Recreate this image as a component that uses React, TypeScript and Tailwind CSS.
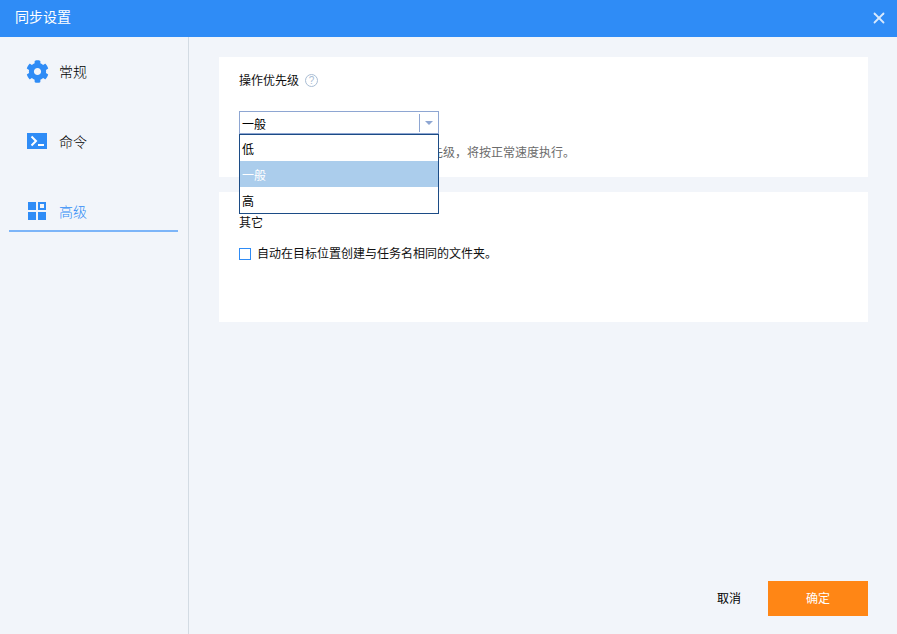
import { FaCog } from "react-icons/fa"
import { X } from "lucide-react"

const FONT = "font-['Liberation_Sans','Noto_Sans_CJK_SC',sans-serif]"

function TerminalIcon() {
  return (
    <svg width="20" height="16" viewBox="0 0 20 16" className="block">
      <rect width="20" height="16" fill="#2f8cf6" />
      <path d="M4.5 3.5 L9 8 L4.5 12.5" fill="none" stroke="#fff" strokeWidth="2" />
      <rect x="11" y="11" width="6" height="2" fill="#fff" />
    </svg>
  )
}

function GridIcon() {
  return (
    <svg width="18" height="18" viewBox="0 0 18 18" className="block">
      <rect width="8" height="8" fill="#2f8cf6" />
      <rect x="11" y="1" width="6" height="6" fill="none" stroke="#2f8cf6" strokeWidth="2" />
      <rect y="10" width="8" height="8" fill="#2f8cf6" />
      <rect x="10" y="10" width="8" height="8" fill="#2f8cf6" />
    </svg>
  )
}

function NavItem({ icon, label, active }: { icon: React.ReactNode; label: string; active?: boolean }) {
  return (
    <div
      className={`flex h-[39px] items-center border-b-2 ${
        active ? "border-[#7db5f8] text-[#2f8cf6]" : "border-transparent text-black"
      }`}
    >
      <div className="flex w-[50px] justify-center pb-px pl-[6px]">{icon}</div>
      <span className="text-sm font-light">{label}</span>
    </div>
  )
}

export default function App() {
  return (
    <div className={`flex h-[634px] w-[897px] flex-col overflow-hidden bg-[#f2f5fa] ${FONT}`}>
      <header className="flex h-[37px] items-center justify-between bg-[#2f8cf6] pb-[3px] pl-[15px] pr-[9px] text-white">
        <span className="text-sm">同步设置</span>
        <X size={18} strokeWidth={2.4} className="mt-px text-[#d8e9fd]" />
      </header>

      <div className="flex flex-1">
        <aside className="flex w-[189px] flex-col gap-[31px] border-r border-[#d3dbe3] pl-[9px] pr-[10px] pt-[16px]">
          <NavItem icon={<FaCog size={23} color="#2f8cf6" />} label="常规" />
          <NavItem icon={<TerminalIcon />} label="命令" />
          <NavItem icon={<GridIcon />} label="高级" active />
        </aside>

        <main className="flex flex-1 flex-col pl-[30px] pr-[29px] pt-[20px]">
          <section className="h-[120px] bg-white pl-[20px] pt-[16px]">
            <div className="flex h-[16px] items-center gap-[6px] text-xs text-[#111]">
              <span>操作优先级</span>
              <span className="mb-px flex h-[13px] w-[13px] items-center justify-center rounded-full border border-[#a9bdd4] text-[10px] leading-none text-[#a9bdd4]">
                ?
              </span>
            </div>

            <div className="relative mt-[22px] w-[200px]">
              <div className="flex h-[23px] items-center border border-[#8ea6d2] pl-[2px] text-xs text-black">
                <span className="flex-1 pt-[5px]">一般</span>
                <span className="h-[18px] w-px bg-[#8ea6d2]" />
                <span className="mx-[5px] h-0 w-0 border-x-[4px] border-t-[4px] border-x-transparent border-t-[#8ea6d2]" />
              </div>
              <ul className="absolute left-0 top-[23px] z-10 flex h-[80px] w-full flex-col border border-[#1c4c86] bg-white text-xs text-black">
                <li className="flex h-[26px] items-center pl-[2px] pt-[3px]">低</li>
                <li className="flex h-[26px] items-center bg-[#abcdec] pl-[2px] pt-[3px] text-white">一般</li>
                <li className="flex h-[26px] items-center pl-[2px] pt-[3px]">高</li>
              </ul>
            </div>

            {/* the start of this line sits under the open list, only this part shows */}
            <p className="ml-[192px] mt-[11px] text-xs leading-[16px] text-[#6b6b6b]">
              先级，将按正常速度执行。
            </p>
          </section>

          <section className="mt-[15px] h-[130px] bg-white pl-[20px] pt-[23px]">
            <p className="text-xs leading-[16px] text-[#111]">其它</p>
            <label className="mt-[15px] flex items-center gap-[6px] text-xs leading-[16px] text-[#111]">
              <span className="mb-px h-[12px] w-[12px] border border-[#2f8cf6] bg-white" />
              自动在目标位置创建与任务名相同的文件夹。
            </label>
          </section>

          <div className="mt-auto flex items-center justify-end pb-[18px]">
            <button className="mr-[27px] text-xs text-black">取消</button>
            <button className="h-[35px] w-[100px] bg-[#ff8615] text-xs text-white">确定</button>
          </div>
        </main>
      </div>
    </div>
  )
}
